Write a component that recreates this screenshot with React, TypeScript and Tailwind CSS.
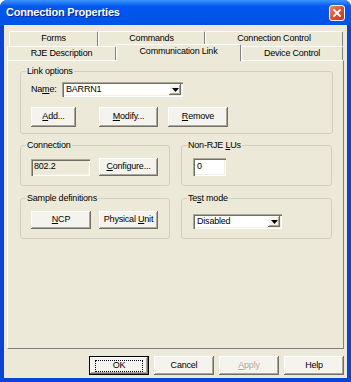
import React from 'react'

const raised =
  "bg-[#f4f3ee] shadow-[inset_-1px_-1px_#716f64,inset_1px_1px_#ffffff,inset_-2px_-2px_#aca899]"
const sunken =
  "shadow-[inset_1px_1px_#aca899,inset_2px_2px_#716f64,inset_-1px_-1px_#ffffff,inset_-2px_-2px_#f1efe2]"

function Btn({children, w, className = ""}: {children: React.ReactNode; w: string; className?: string}) {
  return (
    <div className={`${w} h-full flex items-center justify-center ${raised} ${className}`}>
      <span>{children}</span>
    </div>
  )
}

function Combo({value, w}: {value: string; w: string}) {
  return (
    <div className={`${w} h-[15px] bg-white ${sunken} flex items-center pl-[4px] pr-[2px]`}>
      <span className="flex-1">{value}</span>
      <div className={`w-[12px] h-[11px] flex items-center justify-center ${raised}`}>
        <svg width="7" height="4" viewBox="0 0 7 4">
          <path d="M0 0h7L3.5 4z" fill="#000" />
        </svg>
      </div>
    </div>
  )
}

function Group({label, className, pad, children}: {label: React.ReactNode; className: string; pad: string; children: React.ReactNode}) {
  return (
    <div className={`border border-[#d0d0bf] rounded-[3px] ${className}`}>
      <div className="-mt-[6px] ml-[5px] px-[1px] w-fit bg-[#ece9d8] leading-[11px]">{label}</div>
      <div className={pad}>{children}</div>
    </div>
  )
}

function Tab({label, w, selected = false}: {label: string; w: string; selected?: boolean}) {
  return (
    <div
      className={`${w} flex items-center justify-center bg-[#ece9d8] border-l border-t border-white border-r border-r-[#808080] rounded-t-[2px] ${
        selected ? "relative z-10 h-[17px] -mb-[1px] pb-[2px]" : "h-full"
      }`}
    >
      {label}
    </div>
  )
}

export default function App() {
  return (
    <div className="w-[351px] h-[382px] bg-[#0845d6] flex flex-col font-['Liberation_Sans',Arial,sans-serif] text-[9px] tracking-[-0.2px] text-black rounded-t-[7px] overflow-hidden">
      {/* title bar */}
      <div className="h-[25px] shrink-0 flex items-center pl-[6px] pr-[6px] bg-gradient-to-b from-[#3d95ff] via-[#0058ee] via-25% to-[#0052e6]">
        <span className="flex-1 text-white font-bold text-[11px] tracking-[-0.2px] [text-shadow:1px_1px_#0a1e8c]">
          Connection Properties
        </span>
        <div className="w-[16px] h-[16px] rounded-[3px] border border-white bg-gradient-to-br from-[#e88a6c] via-[#d9532f] to-[#c1391a] flex items-center justify-center">
          <svg width="8" height="8" viewBox="0 0 8 8">
            <path d="M1 1l6 6M7 1L1 7" stroke="#fff" strokeWidth="1.8" strokeLinecap="square" />
          </svg>
        </div>
      </div>

      {/* body */}
      <div className="flex-1 mx-[4px] mb-[4px] bg-[#ece9d8] flex flex-col pt-[6px] pl-[3px] pr-[3px]">
        {/* tab rows */}
        <div className="h-[15px] flex ml-[2px]">
          <Tab label="Forms" w="w-[89px]" />
          <Tab label="Commands" w="w-[107px]" />
          <Tab label="Connection Control" w="w-[138px]" />
        </div>
        <div className="h-[14px] flex items-end">
          <Tab label="RJE Description" w="w-[109px]" />
          <Tab label="Communication Link" w="w-[125px]" selected />
          <Tab label="Device Control" w="w-[102px]" />
        </div>

        {/* panel */}
        <div className="w-[337px] h-[289px] border-t border-l border-white border-r border-b border-r-[#808080] border-b-[#808080] pl-[12px] pt-[10px]">
          <Group label="Link options" className="w-[313px] h-[63px]" pad="pl-[10px]">
            <div className="flex items-center mt-[5px]">
              <span className="w-[31px]">
                Na<u>m</u>e:
              </span>
              <Combo value="BARRN1" w="w-[121px]" />
            </div>
            <div className="flex h-[20px] mt-[10px]">
              <Btn w="w-[45px]">
                <u>A</u>dd...
              </Btn>
              <Btn w="w-[59px]" className="ml-[23px]">
                <u>M</u>odify...
              </Btn>
              <Btn w="w-[60px]" className="ml-[10px]">
                <u>R</u>emove
              </Btn>
            </div>
          </Group>

          <div className="flex gap-[11px] mt-[11px]">
            <Group label="Connection" className="w-[150px] h-[41px]" pad="pl-[10px]">
              <div className="flex items-center h-[18px] mt-[7px]">
                <div className={`w-[59px] h-[17px] flex items-center pl-[3px] ${sunken}`}>802.2</div>
                <Btn w="w-[59px]" className="ml-[9px]">
                  <u>C</u>onfigure...
                </Btn>
              </div>
            </Group>
            <Group
              label={
                <>
                  Non-RJE <u>L</u>Us
                </>
              }
              className="w-[151px] h-[41px]"
              pad="pl-[11px]"
            >
              <div className={`w-[33px] h-[18px] mt-[7px] bg-white flex items-center pl-[4px] ${sunken}`}>0</div>
            </Group>
          </div>

          <div className="flex gap-[11px] mt-[12px]">
            <Group label="Sample definitions" className="w-[150px] h-[41px]" pad="pl-[10px]">
              <div className="flex h-[18px] mt-[7px]">
                <Btn w="w-[60px]">
                  <u>N</u>CP
                </Btn>
                <Btn w="w-[59px]" className="ml-[8px]">
                  Physical <u>U</u>nit
                </Btn>
              </div>
            </Group>
            <Group
              label={
                <>
                  Te<u>s</u>t mode
                </>
              }
              className="w-[151px] h-[41px]"
              pad="pl-[11px]"
            >
              <div className="mt-[10px]">
                <Combo value="Disabled" w="w-[89px]" />
              </div>
            </Group>
          </div>
        </div>

        {/* bottom buttons */}
        <div className="flex justify-end gap-[5px] h-[19px] mt-[7px]">
          <div className="w-[60px] h-full border border-[#000] flex">
            <div className={`flex-1 flex items-center justify-center ${raised}`}>
              <span className="border border-dotted border-[#000] w-[48px] h-[12px] flex items-center justify-center">
                OK
              </span>
            </div>
          </div>
          <Btn w="w-[60px]">Cancel</Btn>
          <Btn w="w-[60px]" className="text-[#aca899] [text-shadow:1px_1px_#ffffff]">
            <u>A</u>pply
          </Btn>
          <Btn w="w-[60px]">Help</Btn>
        </div>
      </div>
    </div>
  )
}
